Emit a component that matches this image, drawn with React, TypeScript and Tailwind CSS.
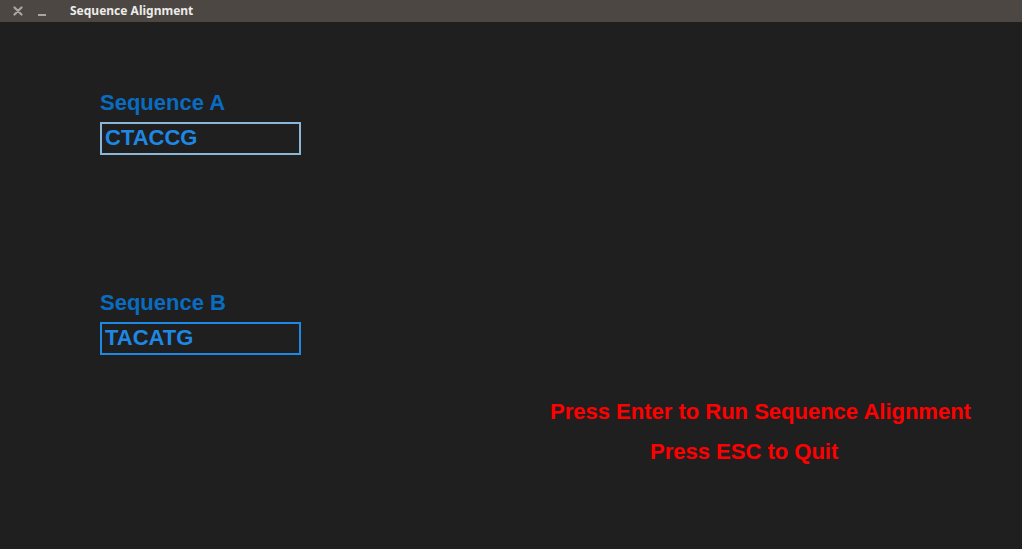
export default function App() {
  const sans = { fontFamily: '"Liberation Sans", Arial, sans-serif' };
  return (
    <div className="w-[1022px] h-[549px] bg-[#1f1f1f] flex flex-col overflow-hidden">
      <div
        className="h-[22px] bg-[#4c4742] flex items-center shrink-0"
        style={{ fontFamily: '"Noto Sans", "Open Sans", sans-serif' }}
      >
        <svg className="ml-[13px]" width="10" height="10" viewBox="0 0 10 10">
          <path d="M1.5 1.5 L8.5 8.5 M8.5 1.5 L1.5 8.5" stroke="#a9a6a2" strokeWidth="2.2" strokeLinecap="round" />
        </svg>
        <div className="ml-[15px] mt-[7px] w-[8px] h-[2px] bg-[#a9a6a2]" />
        <div className="ml-[24px] text-[12px] font-bold text-[#ecebe9] leading-none">Sequence Alignment</div>
      </div>
      <div className="flex flex-col pl-[100px] pt-[70px]" style={sans}>
        <div className="text-[22px] leading-[22px] font-bold text-[#0a6cc0]">Sequence A</div>
        <div className="mt-[8px] w-[201px] h-[33px] border-2 border-[#8cb6d6] pt-[3px] pl-[3px] text-[22px] leading-[22px] font-bold text-[#1e88e5]">
          CTACCG
        </div>
        <div className="mt-[137px] text-[22px] leading-[22px] font-bold text-[#0a6cc0]">Sequence B</div>
        <div className="mt-[8px] w-[201px] h-[33px] border-2 border-[#1e88e5] pt-[3px] pl-[3px] text-[22px] leading-[22px] font-bold text-[#1e88e5]">
          TACATG
        </div>
      </div>
      <div className="flex flex-col pt-[46px] text-[22px] leading-[22px] font-bold text-[#ff0000]" style={sans}>
        <div className="pl-[550px]">Press Enter to Run Sequence Alignment</div>
        <div className="pl-[650px] mt-[18px]">Press ESC to Quit</div>
      </div>
    </div>
  );
}
